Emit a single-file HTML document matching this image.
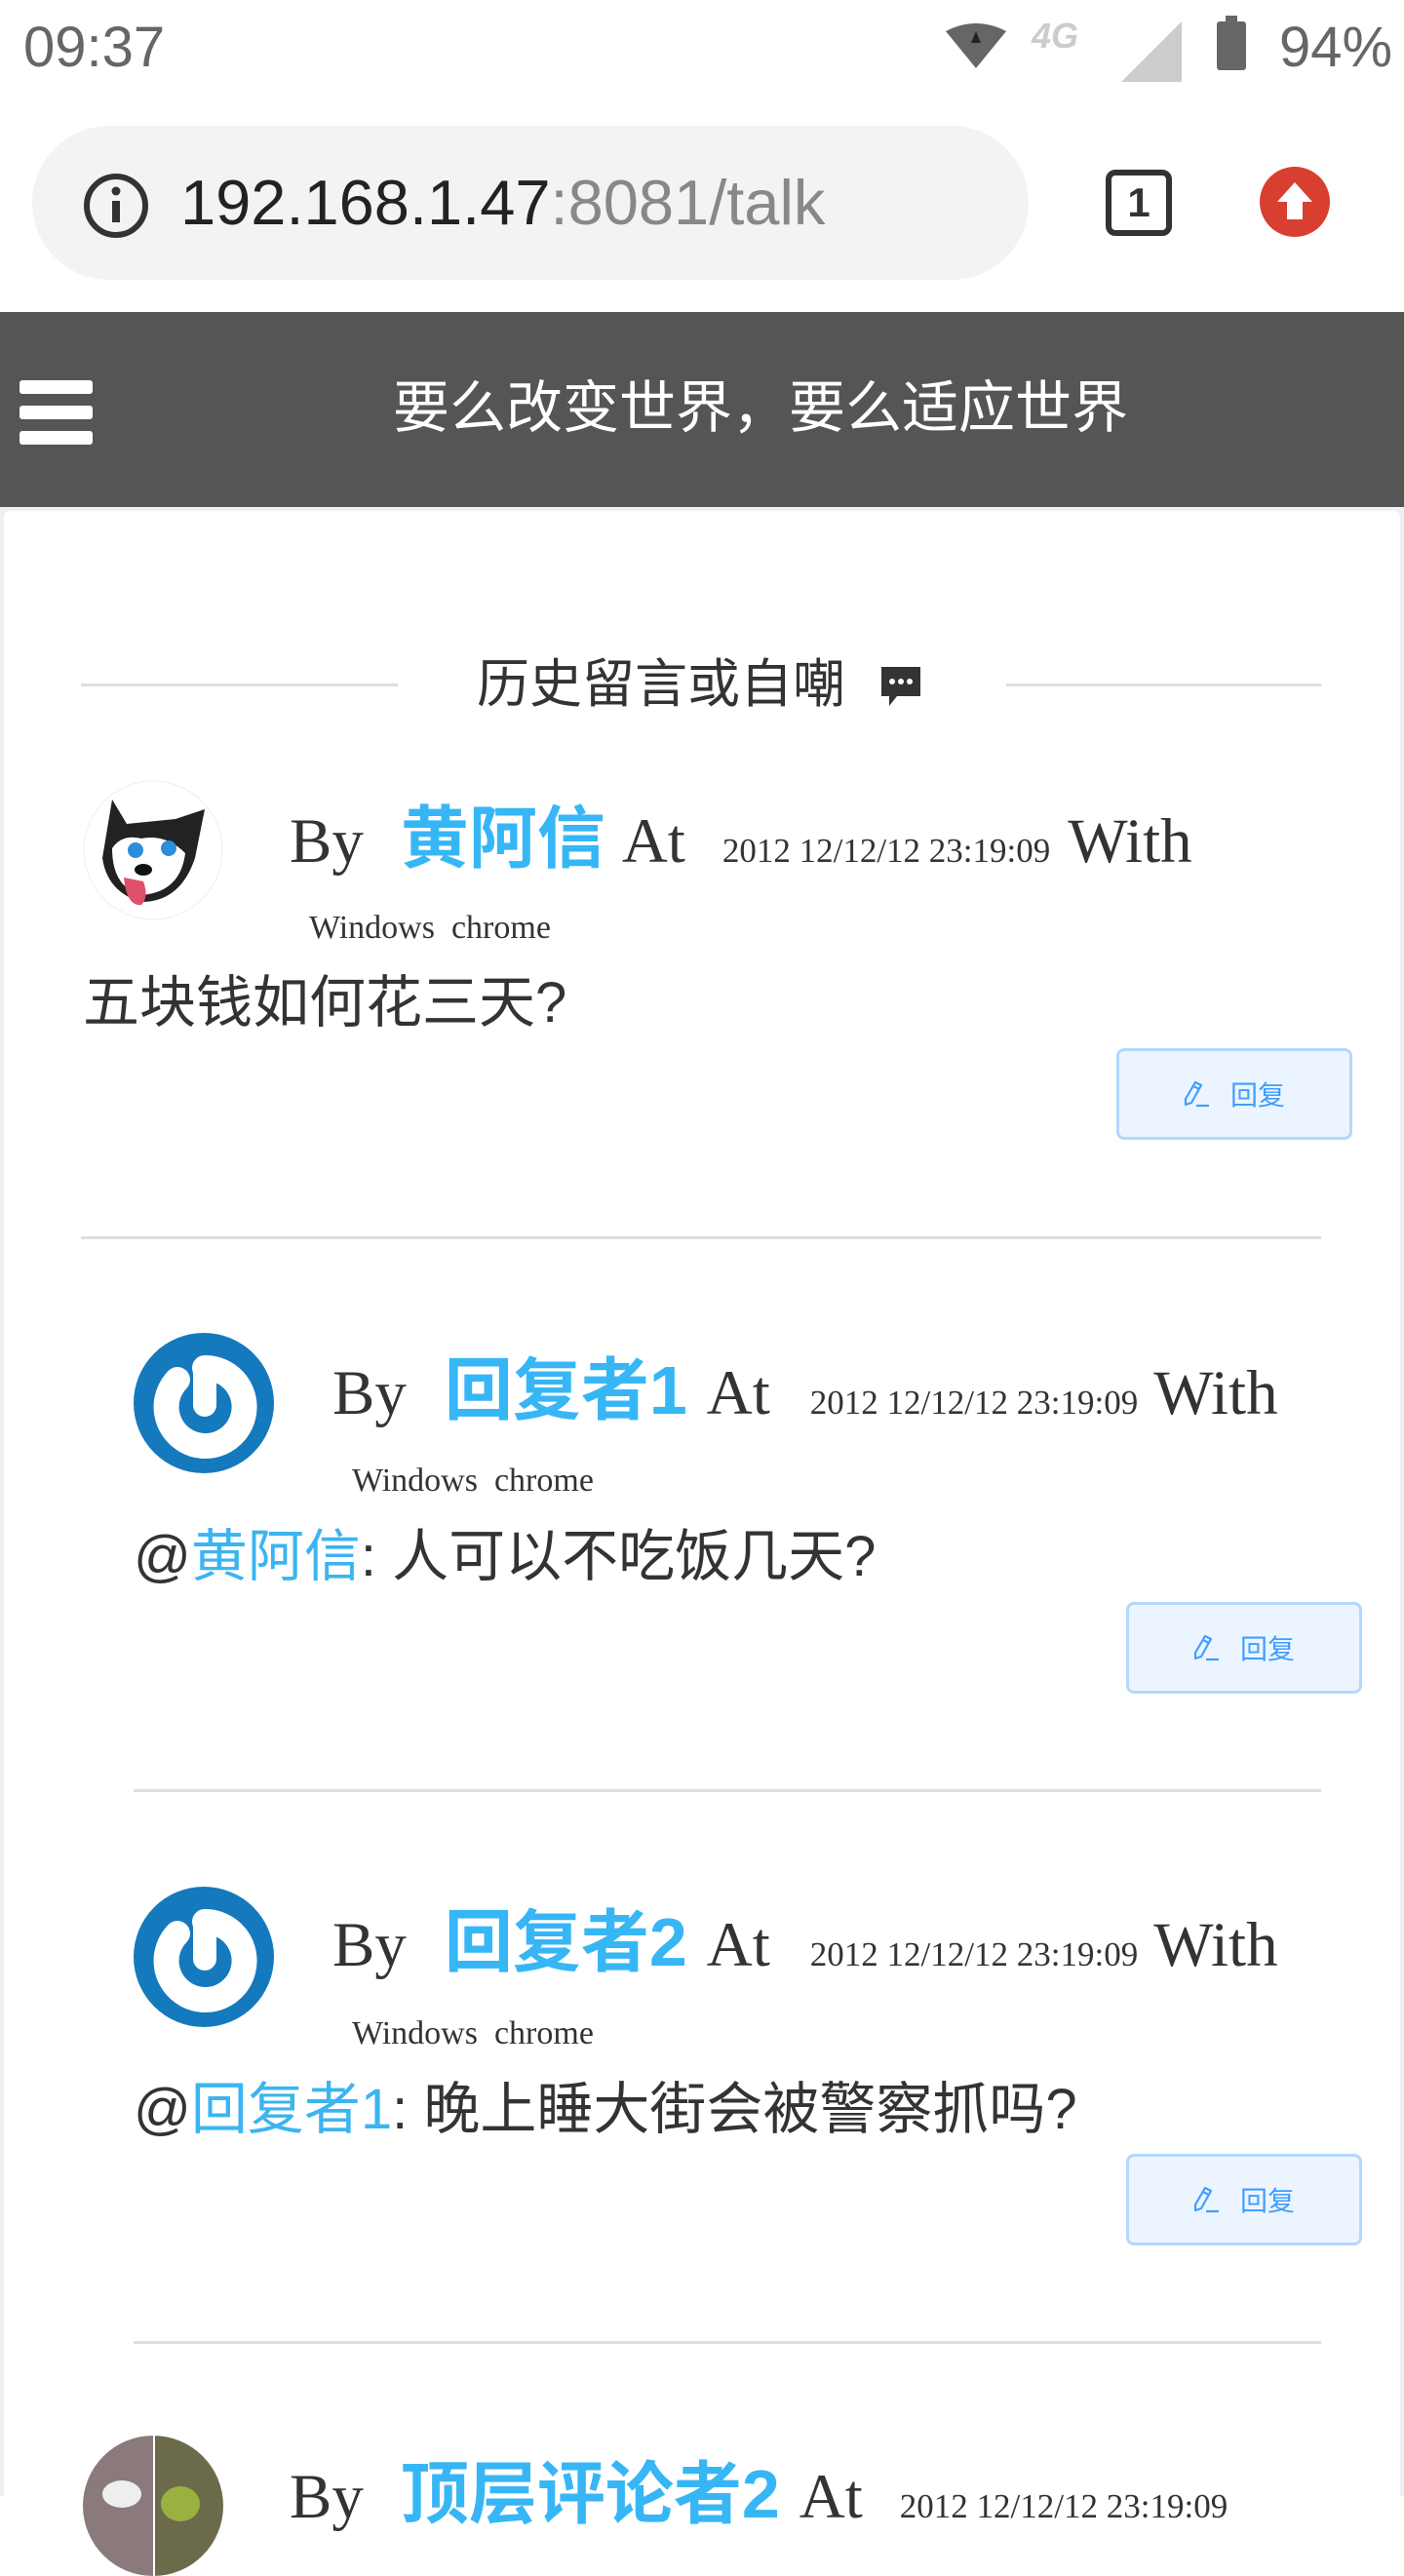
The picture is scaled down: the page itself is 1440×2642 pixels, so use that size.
<!DOCTYPE html>
<html><head><meta charset="utf-8"><style>
*{margin:0;padding:0;box-sizing:border-box}
body{width:1440px;height:2560px;overflow:hidden;background:#fff;position:relative;font-family:"Liberation Sans","Noto Sans CJK SC",sans-serif;color:#333}
.a{position:absolute}
.hdr{position:absolute;white-space:nowrap;line-height:80px;font-family:"Liberation Serif","Noto Sans CJK SC",serif;color:#333}
.hdr .by{font-size:65px}
.hdr .nm{font-size:70px;font-weight:bold;color:#37b6f6;font-family:"Liberation Sans","Noto Sans CJK SC",sans-serif}
.hdr .dt{font-size:35px}
.os{position:absolute;font-family:"Liberation Serif",serif;font-size:34px;color:#333;white-space:pre;line-height:40px}
.ct{position:absolute;font-size:58px;color:#333;line-height:70px;white-space:nowrap;font-family:"Liberation Sans","Noto Sans CJK SC",sans-serif}
.ct b{font-weight:normal;color:#3cb4f0}
.btn{position:absolute;width:242px;height:94px;background:#ecf5ff;border:3px solid #b3d8ff;border-radius:8px;color:#409eff;font-size:28px;display:flex;align-items:center;justify-content:center;font-family:"Liberation Sans","Noto Sans CJK SC",sans-serif}
.btn svg{margin-right:20px}
.hr{position:absolute;height:3px;background:#dcdee6}
.pw{position:absolute;width:144px;height:144px;border-radius:50%;background:#1579bd}
</style></head><body>
<!-- status bar -->
<div class="a" style="left:24px;top:16px;font-size:58px;color:#666;line-height:66px">09:37</div>
<svg class="a" style="left:968px;top:22px" width="66" height="50" viewBox="0 0 66 50"><path d="M2 10 Q33 -6 64 10 L33 48 Z" fill="#666"/><path d="M33 10 L28 22 L38 22Z" fill="#222"/></svg>
<div class="a" style="left:1058px;top:16px;font-size:36px;font-weight:bold;color:#ccc;font-style:italic">4G</div>
<svg class="a" style="left:1150px;top:22px" width="64" height="64"><path d="M62 0 L62 62 L0 62Z" fill="#ccc"/></svg>
<div class="a" style="left:1248px;top:22px;width:30px;height:50px;background:#666;border-radius:3px"></div>
<div class="a" style="left:1257px;top:16px;width:12px;height:8px;background:#666"></div>
<div class="a" style="left:1312px;top:16px;font-size:58px;color:#666;line-height:66px">94%</div>
<!-- url bar -->
<div class="a" style="left:33px;top:129px;width:1022px;height:158px;background:#f1f3f4;border-radius:79px"></div>
<svg class="a" style="left:84px;top:176px" width="70" height="70" viewBox="0 0 70 70"><circle cx="35" cy="35" r="30" fill="none" stroke="#333" stroke-width="6"/><rect x="31" y="30" width="8" height="22" fill="#333"/><circle cx="35" cy="20" r="4.5" fill="#333"/></svg>
<div class="a" style="left:185px;top:168px;font-size:65px;line-height:80px;color:#222">192.168.1.47<span style="color:#888">:8081/talk</span></div>
<div class="a" style="left:1134px;top:174px;width:68px;height:68px;border:6px solid #333;border-radius:10px;font-size:42px;font-weight:bold;color:#333;text-align:center;line-height:56px">1</div>
<svg class="a" style="left:1292px;top:171px" width="72" height="72" viewBox="0 0 72 72"><circle cx="36" cy="36" r="36" fill="#d93f30"/><path d="M36 16 L54 36 L44 36 L44 54 L28 54 L28 36 L18 36Z" fill="#fff"/></svg>
<!-- header -->
<div class="a" style="left:0;top:320px;width:1440px;height:200px;background:#555"></div>
<div class="a" style="left:20px;top:390px;width:75px;height:14px;background:#fff;border-radius:3px"></div>
<div class="a" style="left:20px;top:416px;width:75px;height:14px;background:#fff;border-radius:3px"></div>
<div class="a" style="left:20px;top:442px;width:75px;height:14px;background:#fff;border-radius:3px"></div>
<div class="a" style="left:0;top:384px;width:1560px;text-align:center;font-size:58px;color:#fff;line-height:70px">要么改变世界，要么适应世界</div>
<!-- card -->
<div class="a" style="left:0;top:520px;width:1440px;height:2040px;background:#eef0f6"></div>
<div class="a" style="left:4px;top:524px;width:1432px;height:2040px;background:#fff;border-radius:6px"></div>
<div class="hr" style="left:83px;top:701px;width:325px"></div>
<div class="hr" style="left:1032px;top:701px;width:323px"></div>
<div class="a" style="left:489px;top:668px;font-size:54px;line-height:68px;color:#333">历史留言或自嘲</div>
<svg class="a" style="left:902px;top:682px" width="44" height="46" viewBox="0 0 44 46"><path d="M2 2 H42 V32 H18 L10 42 V32 H2Z" fill="#333"/><circle cx="13" cy="17" r="3" fill="#fff"/><circle cx="22" cy="17" r="3" fill="#fff"/><circle cx="31" cy="17" r="3" fill="#fff"/></svg>

<!-- comment 1 -->
<svg class="a" style="left:85px;top:800px" width="144" height="144" viewBox="0 0 144 144"><circle cx="72" cy="72" r="71" fill="#fff" stroke="#eee"/><path d="M30 20 L45 45 L95 40 L125 30 L115 80 Q100 125 60 125 Q25 115 20 80 Z" fill="#222"/><path d="M30 70 Q40 55 60 60 Q85 55 105 75 Q100 115 60 118 Q30 110 30 70Z" fill="#fff"/><circle cx="54" cy="72" r="8" fill="#2a8ed8"/><circle cx="88" cy="70" r="8" fill="#2a8ed8"/><ellipse cx="62" cy="92" rx="9" ry="6" fill="#111"/><path d="M42 100 Q45 130 60 128 Q68 120 62 104Z" fill="#e0506a"/></svg>
<div class="hdr" style="left:297px;top:820px"><span class="by">By</span><span class="nm" style="margin-left:38px">黄阿信</span><span class="by" style="margin-left:17px">At</span><span class="dt" style="margin-left:38px">2012 12/12/12 23:19:09</span><span class="by" style="margin-left:18px">With</span></div>
<div class="os" style="left:317px;top:932px">Windows  chrome</div>
<div class="ct" style="left:85px;top:994px">五块钱如何花三天?</div>
<div class="btn" style="left:1145px;top:1075px"><svg width="28" height="30" viewBox="0 0 28 30"><path d="M12 3 L18 6 L8 24 L2 26 L2 20Z M10 7 L16 10" fill="none" stroke="#409eff" stroke-width="2.2" stroke-linejoin="round"/><path d="M13 27 H26" stroke="#409eff" stroke-width="2.2"/></svg>回复</div>
<div class="hr" style="left:83px;top:1268px;width:1272px"></div>

<!-- reply 1 -->
<div class="pw" style="left:137px;top:1367px"><svg width="144" height="144" viewBox="0 0 144 144"><path d="M45 48 A40 40 0 1 0 73 36" fill="none" stroke="#fff" stroke-width="26" stroke-linecap="round"/><path d="M73 36 L73 74" stroke="#fff" stroke-width="24" stroke-linecap="round"/></svg></div>
<div class="hdr" style="left:341px;top:1386px"><span class="by">By</span><span class="nm" style="margin-left:39px">回复者1</span><span class="by" style="margin-left:20px">At</span><span class="dt" style="margin-left:41px">2012 12/12/12 23:19:09</span><span class="by" style="margin-left:16px">With</span></div>
<div class="os" style="left:361px;top:1499px">Windows  chrome</div>
<div class="ct" style="left:137px;top:1562px">@<b>黄阿信</b>: 人可以不吃饭几天?</div>
<div class="btn" style="left:1155px;top:1643px"><svg width="28" height="30" viewBox="0 0 28 30"><path d="M12 3 L18 6 L8 24 L2 26 L2 20Z M10 7 L16 10" fill="none" stroke="#409eff" stroke-width="2.2" stroke-linejoin="round"/><path d="M13 27 H26" stroke="#409eff" stroke-width="2.2"/></svg>回复</div>
<div class="hr" style="left:137px;top:1835px;width:1218px"></div>

<!-- reply 2 -->
<div class="pw" style="left:137px;top:1935px"><svg width="144" height="144" viewBox="0 0 144 144"><path d="M45 48 A40 40 0 1 0 73 36" fill="none" stroke="#fff" stroke-width="26" stroke-linecap="round"/><path d="M73 36 L73 74" stroke="#fff" stroke-width="24" stroke-linecap="round"/></svg></div>
<div class="hdr" style="left:341px;top:1952px"><span class="by">By</span><span class="nm" style="margin-left:39px">回复者2</span><span class="by" style="margin-left:20px">At</span><span class="dt" style="margin-left:41px">2012 12/12/12 23:19:09</span><span class="by" style="margin-left:16px">With</span></div>
<div class="os" style="left:361px;top:2066px">Windows  chrome</div>
<div class="ct" style="left:137px;top:2129px">@<b>回复者1</b>: 晚上睡大街会被警察抓吗?</div>
<div class="btn" style="left:1155px;top:2209px"><svg width="28" height="30" viewBox="0 0 28 30"><path d="M12 3 L18 6 L8 24 L2 26 L2 20Z M10 7 L16 10" fill="none" stroke="#409eff" stroke-width="2.2" stroke-linejoin="round"/><path d="M13 27 H26" stroke="#409eff" stroke-width="2.2"/></svg>回复</div>
<div class="hr" style="left:137px;top:2401px;width:1218px"></div>

<!-- comment 2 (partial) -->
<svg class="a" style="left:85px;top:2498px" width="144" height="144" viewBox="0 0 144 144"><defs><clipPath id="c"><circle cx="72" cy="72" r="72"/></clipPath></defs><g clip-path="url(#c)"><rect width="72" height="144" fill="#8a7a7c"/><rect x="74" width="70" height="144" fill="#6b6a4a"/><ellipse cx="40" cy="60" rx="20" ry="14" fill="#eee"/><ellipse cx="100" cy="70" rx="20" ry="18" fill="#9ab040"/></g></svg>
<div class="hdr" style="left:297px;top:2518px"><span class="by">By</span><span class="nm" style="margin-left:38px">顶层评论者2</span><span class="by" style="margin-left:20px">At</span><span class="dt" style="margin-left:38px">2012 12/12/12 23:19:09</span></div>
</body></html>
